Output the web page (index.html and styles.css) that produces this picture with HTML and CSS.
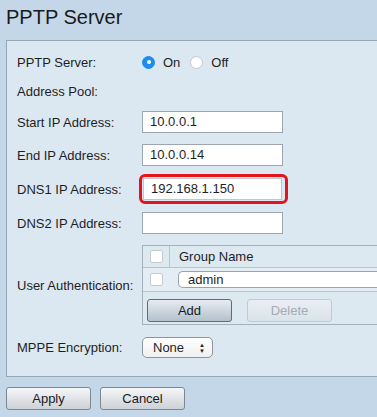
FILE: index.html
```html
<!DOCTYPE html>
<html lang="en">
<head>
    <meta charset="UTF-8">
    <meta name="viewport" content="width=device-width, initial-scale=1.0">
    <title>PPTP Server</title>
    <link rel="stylesheet" href="styles.css">
</head>
<body>
    <h1 class="page-title">PPTP Server</h1>

    <div class="panel">
        <div class="row row-plain">
            <div class="label">PPTP Server:</div>
            <div class="value radios">
                <span class="radio radio-on"></span><span class="radio-text">On</span>
                <span class="radio"></span><span class="radio-text">Off</span>
            </div>
        </div>

        <div class="row row-plain">
            <div class="label">Address Pool:</div>
        </div>

        <div class="row">
            <div class="label">Start IP Address:</div>
            <div class="value"><div class="text-input">10.0.0.1</div></div>
        </div>

        <div class="row">
            <div class="label">End IP Address:</div>
            <div class="value"><div class="text-input">10.0.0.14</div></div>
        </div>

        <div class="row">
            <div class="label">DNS1 IP Address:</div>
            <div class="value">
                <div class="highlight"><div class="text-input">192.168.1.150</div></div>
            </div>
        </div>

        <div class="row">
            <div class="label">DNS2 IP Address:</div>
            <div class="value"><div class="text-input"></div></div>
        </div>

        <div class="row">
            <div class="label">User Authentication:</div>
            <div class="value">
                <div class="auth-table">
                    <div class="auth-row auth-head">
                        <div class="check-cell"><span class="checkbox"></span></div>
                        <div class="name-cell">Group Name</div>
                    </div>
                    <div class="auth-row auth-item">
                        <div class="check-cell"><span class="checkbox"></span></div>
                        <div class="name-cell"><div class="name-input">admin</div></div>
                    </div>
                    <div class="auth-actions">
                        <button class="btn btn-add">Add</button>
                        <button class="btn btn-disabled">Delete</button>
                    </div>
                </div>
            </div>
        </div>

        <div class="row">
            <div class="label">MPPE Encryption:</div>
            <div class="value">
                <div class="select">None<span class="select-arrows">&#9650;<br>&#9660;</span></div>
            </div>
        </div>
    </div>

    <div class="footer-buttons">
        <button class="btn btn-main">Apply</button>
        <button class="btn btn-main">Cancel</button>
    </div>
</body>
</html>
```

FILE: styles.css
```css
* {
    margin: 0;
    padding: 0;
    box-sizing: border-box;
}

body {
    font-family: "Liberation Sans", Arial, sans-serif;
    font-size: 13px;
    color: #1e1e1e;
    background: #c3d7e9;
    overflow: hidden;
    width: 377px;
    height: 417px;
}

.page-title {
    font-size: 20px;
    font-weight: normal;
    color: #1a1a1a;
    height: 40px;
    padding: 6px 0 0 6px;
}

.panel {
    margin-left: 6px;
    width: 371px;
    background: #dce8f1;
    border: 1px solid #95a6b5;
    border-right: none;
    padding: 12px 0 18px 10px;
    display: flex;
    flex-direction: column;
    gap: 11px;
}

.row {
    display: grid;
    grid-template-columns: 125px 1fr;
    align-items: center;
    min-height: 22px;
}

.row-plain {
    min-height: 18px;
}

.label {
    color: #1e1e1e;
}

.value {
    display: flex;
    align-items: center;
}

.radio {
    width: 13px;
    height: 13px;
    border-radius: 50%;
    background: #fff;
    border: 1px solid #c4c8cc;
    display: inline-block;
}

.radio-on {
    background: #1e8bef;
    border-color: #1e8bef;
    position: relative;
}

.radio-on::after {
    content: "";
    position: absolute;
    left: 3.5px;
    top: 3.5px;
    width: 4px;
    height: 4px;
    border-radius: 50%;
    background: #fff;
}

.radio-text {
    margin: 0 10px 0 8px;
}

.text-input {
    width: 141px;
    height: 22px;
    background: #fff;
    border: 1px solid #9ba6b0;
    padding: 0 7px;
    line-height: 20px;
    font-size: 13px;
}

.highlight {
    margin: -3px 0 -3px -3px;
    padding: 1px;
    border: 3px solid #e3141c;
    border-radius: 6px;
    width: 149px;
}

.highlight .text-input {
    width: 139px;
    border-color: #c0c6cc;
}

.auth-table {
    width: 235px;
    border: 1px solid #a4b1bd;
    border-right: none;
    background: #dde9f1;
}

.auth-row {
    display: flex;
    align-items: stretch;
    border-bottom: 1px solid #b8c4ce;
}

.auth-head {
    height: 22px;
}

.auth-item {
    height: 24px;
    background: #e4edf3;
}

.check-cell {
    width: 27px;
    display: flex;
    align-items: center;
    justify-content: center;
    border-right: 1px solid #b8c4ce;
}

.auth-item .check-cell {
    border-right: none;
}

.name-cell {
    flex: 1;
    display: flex;
    align-items: center;
    padding-left: 9px;
}

.auth-item .name-cell {
    padding-left: 8px;
}

.checkbox {
    width: 13px;
    height: 13px;
    background: #fff;
    border: 1px solid #c6cbd0;
    border-radius: 2px;
}

.name-input {
    width: 100%;
    height: 17px;
    background: #fff;
    border: 1px solid #9aa3ab;
    border-radius: 5px 0 0 5px;
    border-right: none;
    padding-left: 9px;
    line-height: 15px;
}

.auth-actions {
    display: flex;
    gap: 15px;
    padding: 7px 0 2px 4px;
}

.btn {
    font-family: "Liberation Sans", Arial, sans-serif;
    font-size: 13px;
    color: #1a1a1a;
    height: 23px;
    border-radius: 3px;
    border: 1px solid #7b8894;
    background: linear-gradient(#f5f6f7, #cdd2d7);
}

.btn-add {
    width: 85px;
    background: linear-gradient(#e6ecf1, #b4c1cc);
    border-color: #5e6d7a;
}

.btn-disabled {
    width: 85px;
    color: #a4acb4;
    background: linear-gradient(#e8eef3, #dbe3ea);
    border-color: #c0cad2;
}

.select {
    width: 71px;
    height: 21px;
    border: 1px solid #8e959c;
    border-radius: 5px;
    background: linear-gradient(#ffffff, #f0f0f0);
    padding-left: 10px;
    line-height: 19px;
    position: relative;
}

.select-arrows {
    position: absolute;
    right: 7px;
    top: 4px;
    font-size: 6px;
    line-height: 6px;
    color: #222;
}

.footer-buttons {
    display: flex;
    gap: 9px;
    padding: 10px 0 0 6px;
}

.btn-main {
    width: 85px;
}
```
